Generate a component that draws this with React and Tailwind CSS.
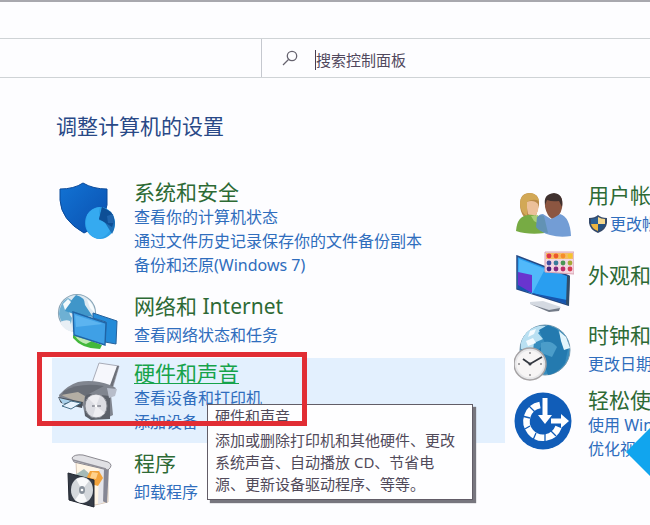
import React from "react";

function SecurityIcon() {
  return (
    <svg viewBox="0 0 64 64" className="h-16 w-16 shrink-0" aria-hidden="true">
      <defs>
        <linearGradient id="shieldFill" x1="0" y1="0" x2="1" y2="1">
          <stop offset="0" stopColor="#1273d4" />
          <stop offset="1" stopColor="#0a4fae" />
        </linearGradient>
      </defs>
      <path d="M4 10Q18 10 27 4Q37 10 51 10V26Q48 46 28 54Q5 41 4 21Z" fill="url(#shieldFill)" stroke="#0b4a9a" strokeWidth="1" />
      <ellipse cx="44" cy="44" rx="15" ry="16" fill="#2b9fe6" />
      <path d="M31 36Q35 29 44 28Q41 35 47 42L56 47Q52 58 42 60Q29 56 30 42Z" fill="#35aaf0" />
      <path d="M46 28Q58 33 59 43Q59 50 56 55L48 42L43 41Z" fill="#1d70b8" />
      <path d="M46 28L43 40L56 48Q60 39 55 33Z" fill="#0e4f96" />
      <path d="M51 37L57 35L58 44L52 44Z" fill="#1f64ad" />
    </svg>
  );
}

function NetworkIcon() {
  return (
    <svg viewBox="0 0 64 64" className="h-16 w-16 shrink-0" aria-hidden="true">
      <circle cx="21" cy="20" r="18.5" fill="#dce9f1" stroke="#8aa6b8" strokeWidth="1.2" />
      <path d="M3 21Q4 9 12 5L17 8L12 15L14 22L16 25L14 36Q5 33 3 21Z" fill="#6eb0d3" />
      <path d="M20 2Q29 4 29 12L37 24L18 21L9 18Q14 8 20 2Z" fill="#4096c9" />
      <path d="M7 11L12 6L15 9L9 17Z" fill="#f3fafc" />
      <path d="M31 6Q38 11 39 20L34 15Z" fill="#f7fbfd" />
      <path d="M4 29Q10 26 14 28L17 39Q7 37 4 29Z" fill="#e8eff5" />
      <path d="M17 42Q31 46 46 52L44 56Q26 56 17 45Z" fill="#43b83b" />
      <path d="M19 43Q30 47 38 47L30 51Q23 49 19 43Z" fill="#bfe8b4" />
      <path d="M37 20L61 28L60 51L49 49L50 29L37 25Z" fill="#248bd8" stroke="#27629c" strokeWidth="1" />
      <path d="M17 19L50 30L49 52L18 42Z" fill="#3fa0e6" stroke="#1f64a6" strokeWidth="1.4" />
      <path d="M19 22L47 31L20 34Z" fill="#5cb4f0" />
    </svg>
  );
}

function PrinterIcon() {
  return (
    <svg viewBox="0 0 64 64" className="h-16 w-16 shrink-0" aria-hidden="true">
      <path d="M36 23L43 3L63 6L56 30Z" fill="#f6f7fc" stroke="#a9acb8" strokeWidth="1" />
      <path d="M61 6L63 6L56 29L53 28Z" fill="#6c7079" />
      <path d="M3 35Q12 25 22 22Q38 19 54 25L60 28L55 35L57 55L49 59L29 56L27 46L4 42Z" fill="#80858f" />
      <path d="M8 31Q24 22 48 26L29 36L5 36Z" fill="#696e77" />
      <path d="M5 35L22 32L29 36L27 44Z" fill="#b3aea4" />
      <path d="M2 37L27 42L26 48L5 43Z" fill="#454d58" />
      <path d="M3 38L16 41L7 44Z" fill="#a9d0ea" />
      <path d="M15 41L25 43L15 49L6 46Z" fill="#e6f2fd" stroke="#47708a" strokeWidth="1" />
      <path d="M29 37Q30 34 34 34L54 36V59L35 60L29 56Z" fill="#5b6069" />
      <ellipse cx="40" cy="46" rx="11" ry="12" fill="#dcdde3" stroke="#858890" strokeWidth="1" />
      <path d="M40 46L32 38Q38 33 44 36ZM40 46L49 53Q43 59 37 56Z" fill="#eeeef2" />
      <path d="M36 46H45" stroke="#7e828c" strokeWidth="1.4" />
      <circle cx="40" cy="46" r="1.3" fill="#fff" />
      <path d="M51 28L61 29L59 36L53 38Z" fill="#b7bdca" />
    </svg>
  );
}

function ProgramsIcon() {
  return (
    <svg viewBox="0 0 64 64" className="h-16 w-16 shrink-0" aria-hidden="true">
      <path d="M20 12L52 19V52L39 55L22 52Z" fill="#fff5e5" stroke="#d8c7b7" strokeWidth="1" />
      <path d="M46 19L53 16L51 53L46 51Z" fill="#858694" />
      <path d="M43 20L48 18L47 53L42 54Z" fill="#e4e4ea" />
      <path d="M16 8Q18 4 27 5L52 12Q58 15 52 20L18 12Z" fill="#e1e1e5" stroke="#8b8990" strokeWidth="1" />
      <path d="M17 10L50 19" stroke="#908f98" strokeWidth="1.5" />
      <path d="M19 25L28 19L36 26L35 32L20 31Z" fill="#a5bab7" />
      <path d="M34 21L43 21L47 28L42 36L35 34L31 27Z" fill="#f3a33b" />
      <path d="M36 22L42 23L40 29L34 28Z" fill="#ffd18b" />
      <path d="M12 23L38 30V57L13 50Z" fill="#353b46" stroke="#222731" strokeWidth="1" />
      <ellipse cx="26" cy="40" rx="11" ry="13" fill="#d4d8dc" />
      <path d="M26 40L20 29Q28 25 33 31ZM26 40L31 51Q25 55 19 50Z" fill="#f9fafb" />
      <ellipse cx="26" cy="40" rx="3" ry="4" fill="#89929c" />
      <circle cx="26" cy="40" r="1.3" fill="#fff" />
    </svg>
  );
}

function UsersIcon() {
  return (
    <svg viewBox="0 0 60 50" className="mt-2 h-[50px] w-[60px] shrink-0" aria-hidden="true">
      <path d="M6 14Q6 3 16 3Q26 4 25 15L22 26L10 27Q6 22 6 14Z" fill="#b88a48" />
      <path d="M12 12Q20 9 24 14Q26 21 20 27L14 24Z" fill="#ecc09a" />
      <path d="M6 13Q7 3 16 3Q23 3 25 11Q19 8 13 12L13 26Q6 22 6 13Z" fill="#d2a856" />
      <path d="M2 41Q3 26 14 25Q26 23 31 39V43Q14 45 2 41Z" fill="#77ab44" />
      <path d="M17 26L24 25L27 35L20 31Z" fill="#a9cf78" />
      <path d="M31 17Q30 4 41 4Q50 5 48 18Q46 28 38 29Q33 26 31 17Z" fill="#8c5641" />
      <path d="M31 15Q29 4 40 3Q50 4 48 17L45 11Q38 12 33 10Z" fill="#40312f" />
      <path d="M24 27Q25 24 29 24L37 29Q40 28 46 24Q56 27 57 46Q46 48 36 45Q27 43 24 36Z" fill="#739dd5" />
      <path d="M23 27Q26 24 30 26L34 43Q25 42 22 37Z" fill="#6292b4" />
    </svg>
  );
}

function AppearanceIcon() {
  return (
    <svg viewBox="0 0 60 64" className="h-16 w-[60px] shrink-0" aria-hidden="true">
      <path d="M16 52L29 51L47 57L45 60L34 60L16 54Z" fill="#d4d9e1" />
      <path d="M16 54L35 60L46 58L45 61L35 62Z" fill="#737b88" />
      <path d="M3 6L55 26L54 55L3 39Z" fill="#299ef0" stroke="#264a85" strokeWidth="1.5" />
      <path d="M5 9L31 19L18 44L4 37Z" fill="#51b9fa" />
      <path d="M4 22L18 25V43L4 38Z" fill="#6934cf" />
      <path d="M18 43L53 50V54L4 39V35Z" fill="#1655af" />
      <path d="M53 26L56 26L55 56L52 54Z" fill="#304d6a" />
      <path d="M31 2H60V24L31 22Z" fill="#f3d6e0" stroke="#d9a4b2" strokeWidth="1" />
      <path d="M32 3H59V9H32Z" fill="#f5bc62" />
      <g>
        <circle cx="35" cy="6" r="2.4" fill="#de334c" />
        <circle cx="42" cy="6" r="2.4" fill="#ed592b" />
        <circle cx="49" cy="6" r="2.4" fill="#f68c2a" />
        <circle cx="56" cy="6" r="2.4" fill="#f4c42e" />
        <circle cx="35" cy="13" r="2.4" fill="#3f4da0" />
        <circle cx="42" cy="13" r="2.4" fill="#397c99" />
        <circle cx="49" cy="13" r="2.4" fill="#4b9554" />
        <circle cx="56" cy="13" r="2.4" fill="#a3a936" />
        <circle cx="35" cy="19" r="2.4" fill="#48227c" />
        <circle cx="42" cy="19" r="2.4" fill="#84297e" />
        <circle cx="49" cy="19" r="2.4" fill="#bd2c68" />
        <circle cx="56" cy="19" r="2.4" fill="#d53d54" />
      </g>
    </svg>
  );
}

function ClockIcon() {
  return (
    <svg viewBox="0 0 60 64" className="h-16 w-[60px] shrink-0" aria-hidden="true">
      <circle cx="31" cy="28" r="25" fill="#378dbe" stroke="#7499af" strokeWidth="1" />
      <path d="M7 21Q11 7 25 4L32 4L24 11L29 17L20 21L19 28L7 27Z" fill="#b9e0f2" />
      <path d="M16 9L22 7L20 12L14 15ZM12 19L19 16L22 21L14 24Z" fill="#f4fbff" />
      <path d="M25 8L34 3L43 7L49 20L54 27L51 41Q43 52 34 53L28 36L22 30L31 21Z" fill="#247aaf" />
      <path d="M45 9L52 15L56 26L50 28L47 19Z" fill="#e4f5fc" />
      <path d="M27 21Q37 17 43 25L38 35L27 31Z" fill="#4b9dc9" />
      <circle cx="16" cy="42" r="16" fill="#e6e6e8" stroke="#a5a2a4" strokeWidth="1.5" />
      <circle cx="16" cy="42" r="13.5" fill="#f7f5f5" />
      <path d="M16 30V32M16 52V54M4 42H6M26 42H28" stroke="#8c8a8d" strokeWidth="1.4" />
      <path d="M9 37L16 42L28 35" fill="none" stroke="#343840" strokeWidth="1.8" />
      <circle cx="16" cy="42" r="1.5" fill="#343840" />
    </svg>
  );
}

function EaseIcon() {
  return (
    <svg viewBox="0 0 60 64" className="mt-[3px] h-16 w-[60px] shrink-0" aria-hidden="true">
      <circle cx="29" cy="31" r="28.5" fill="#115db8" />
      <path d="M26 15A16.5 16.5 0 1 0 44.5 37" fill="none" stroke="#fff" strokeWidth="6.5" />
      <path d="M15 16L21 22M8 26L16 28M9 40L16 36M19 50L22 43M31 52L31 43M42 46L36 40" stroke="#115db8" strokeWidth="1.3" />
      <path d="M28.5 8H33.5V25H38L31 34L24 25H28.5Z" fill="#fff" />
      <path d="M37 28.5H47V24L55 31L47 38V33.5H37Z" fill="#fff" />
    </svg>
  );
}

function AdminShield() {
  return (
    <svg viewBox="0 0 20 20" className="h-5 w-5 shrink-0" aria-hidden="true">
      <path d="M1 4Q7 4 10 1Q13 4 19 4V9Q18 16 10 19Q2 16 1 9Z" fill="#34496a" />
      <path d="M3 5Q7 5 10 3V10H3Z" fill="#2b5f94" />
      <path d="M10 3Q13 5 17 5V10H10Z" fill="#f3d68a" />
      <path d="M3 10H10V17Q4 15 3 10Z" fill="#edb640" />
      <path d="M10 10H17Q16 15 10 17Z" fill="#24507f" />
    </svg>
  );
}

function Category({ icon, title, links, className = "", textClass = "", linksClass = "", active = false, shield = false, children }) {
  return (
    <section className={`flex items-start gap-[14px] ${className}`}>
      {icon}
      <div className={`whitespace-nowrap ${textClass}`}>
        <h2 className={`text-[21px] leading-[26px] ${active ? "text-[#16a34a] underline decoration-1 underline-offset-2" : "text-[#2d6a35]"}`}>
          <a href="#">{title}</a>
        </h2>
        <ul className={linksClass}>
          {links.map((text) => (
            <li key={text} className="flex items-center gap-0.5 text-base leading-6 text-[#2f6dbd]">
              {shield && <AdminShield />}
              <a href="#">{text}</a>
            </li>
          ))}
        </ul>
      </div>
      {children}
    </section>
  );
}

export default function App() {
  return (
    <div className="min-h-screen overflow-hidden border-t-2 border-[#a8a8ae] bg-[#fdfdff] font-['Noto_Sans','Noto_Sans_CJK_SC',sans-serif]">
      <header className="mt-9 grid h-10 grid-cols-[2fr_3fr] border-y border-[#cfd3d6]">
        <div className="-mr-0.5 border-r border-[#c5c8cf]" />
        <label className="flex items-center pt-1 pl-5">
          <svg viewBox="0 0 16 16" className="mr-[17px] mb-1 ml-0.5 h-4 w-4" fill="none" stroke="#66636f" strokeWidth="1.3" aria-hidden="true">
            <circle cx="10" cy="6" r="4.7" />
            <path d="M6.5 9.5L1 15" />
          </svg>
          <span className="h-5 w-px bg-[#463e53]" />
          <input type="text" aria-label="搜索控制面板" defaultValue="搜索控制面板" className="min-w-0 flex-1 bg-transparent text-[15px] leading-6 text-[#51485d] outline-none" />
        </label>
      </header>

      <main className="pt-8 pl-[52px]">
        <h1 className="mb-[37px] pl-1 text-[21px] leading-8 text-[#294987]">调整计算机的设置</h1>
        <div className="grid grid-cols-[minmax(0,1fr)_136px] gap-[9px]">
          <div>
            <Category className="pb-4 pl-1" icon={<SecurityIcon />} title="系统和安全" links={["查看你的计算机状态", "通过文件历史记录保存你的文件备份副本", "备份和还原(Windows 7)"]} />
            <Category className="mb-px pl-1" icon={<NetworkIcon />} title="网络和 Internet" links={["查看网络状态和任务"]} linksClass="mt-1" />
            <Category className="relative bg-[#e3f0fe] pt-0.5 pb-[9px] pl-1" icon={<PrinterIcon />} title="硬件和声音" links={["查看设备和打印机", "添加设备"]} active>
              <div role="tooltip" className="absolute top-[46px] left-[155px] border border-[#625d67] bg-[#fefeff] pr-2 pb-1 pl-[7px] text-[15px] leading-[22px] whitespace-nowrap text-[#514a5a] shadow-[3px_3px_1px_#77767e]">
                <p className="mb-0.5">硬件和声音</p>
                <p className="min-w-[249px]">添加或删除打印机和其他硬件、更改</p>
                <p>系统声音、自动播放 CD、节省电</p>
                <p>源、更新设备驱动程序、等等。</p>
              </div>
              <div className="pointer-events-none absolute -top-1.5 -left-[15px] h-[74px] w-[270px] border-[5px] border-[#e12d34]" />
            </Category>
            <Category className="mt-[7px] pl-1" icon={<ProgramsIcon />} title="程序" links={["卸载程序"]} linksClass="mt-1" />
          </div>

          <div className="relative overflow-hidden pt-[3px]">
            <Category icon={<UsersIcon />} title="用户帐" links={["更改帐"]} linksClass="mt-1" shield />
            <Category className="mt-2.5" icon={<AppearanceIcon />} title="外观和" links={[]} textClass="pt-3" />
            <Category className="mt-2" icon={<ClockIcon />} title="时钟和" links={["更改日期"]} linksClass="mt-1" />
            <Category className="mt-px" icon={<EaseIcon />} title="轻松使" links={["使用 Win", "优化视"]} />
            <svg viewBox="0 0 24 48" className="absolute top-[249px] right-0 h-12 w-6" aria-hidden="true">
              <path d="M24 0V48L0 24Z" fill="#11a5ee" />
            </svg>
          </div>
        </div>
      </main>
    </div>
  );
}
